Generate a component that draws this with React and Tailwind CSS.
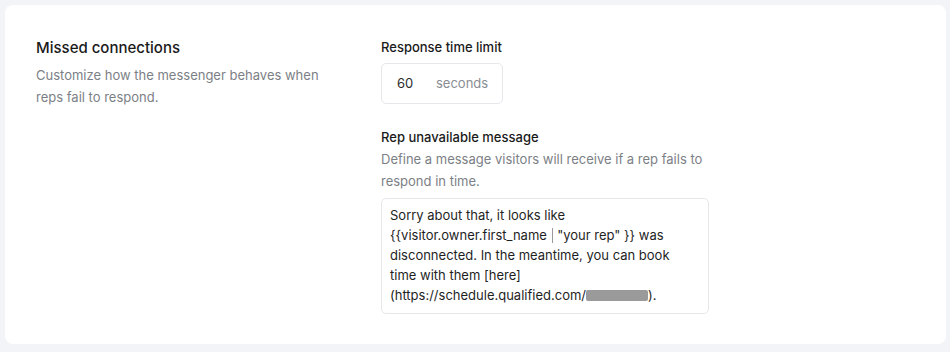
import React, { useState } from "react";

const MissedConnections = () => {
  const [seconds, setSeconds] = useState(60);

  return (
    <div className="min-h-[352px] w-full bg-[#f3f4f7] p-[5px] font-['Inter',sans-serif]">
      <div className="flex h-[339px] w-[941px] rounded-lg bg-white pl-[31px] pt-[32px]">
        {/* Left: section header */}
        <div className="w-[345px] shrink-0">
          <h2 className="text-[15px] font-medium leading-[22px] text-[#1a1a1a]">
            Missed connections
          </h2>
          <p className="mt-[5px] w-[300px] text-[13px] leading-[22px] text-[#7c7f86]">
            Customize how the messenger behaves when reps fail to respond.
          </p>
        </div>

        {/* Right: settings */}
        <div className="flex flex-col">
          {/* Response time limit */}
          <label className="text-[13px] font-medium leading-[20px] text-[#1a1a1a]">
            Response time limit
          </label>
          <div className="mt-[6px] flex h-[41px] w-[122px] items-center rounded-[5px] border border-[#e6e7eb] bg-white">
            <input
              value={seconds}
              onChange={(e) => setSeconds(e.target.value)}
              className="w-[54px] bg-transparent pl-[15px] text-[13px] text-[#2b2b2b] outline-none"
            />
            <span className="text-[13px] text-[#8a8d93]">seconds</span>
          </div>

          {/* Rep unavailable message */}
          <label className="mt-[23px] text-[13px] font-medium leading-[20px] text-[#1a1a1a]">
            Rep unavailable message
          </label>
          <p className="mt-[1px] w-[340px] text-[13px] leading-[22px] text-[#7c7f86]">
            Define a message visitors will receive if a rep fails to respond in time.
          </p>
          <div className="mt-[6px] h-[116px] w-[328px] rounded-[5px] border border-[#e6e7eb] bg-white px-[8px] pt-[6px] text-[13px] leading-[20px] text-[#1f1f1f]">
            Sorry about that, it looks like
            <br />
            {"{{visitor.owner.first_name "}
            <span className="mx-[1px] inline-block h-[15px] w-[1px] translate-y-[3px] bg-[#9a9a9a]" />
            {' "your rep" }} was'}
            <br />
            disconnected. In the meantime, you can book
            <br />
            time with them [here]
            <br />
            (https://schedule.qualified.com/
            <span className="inline-block h-[11px] w-[62px] translate-y-[1px] rounded-[2px] bg-[#9a9a9a]" />
            ).
          </div>
        </div>
      </div>
    </div>
  );
};

export default function App() {
  return <MissedConnections />;
}
